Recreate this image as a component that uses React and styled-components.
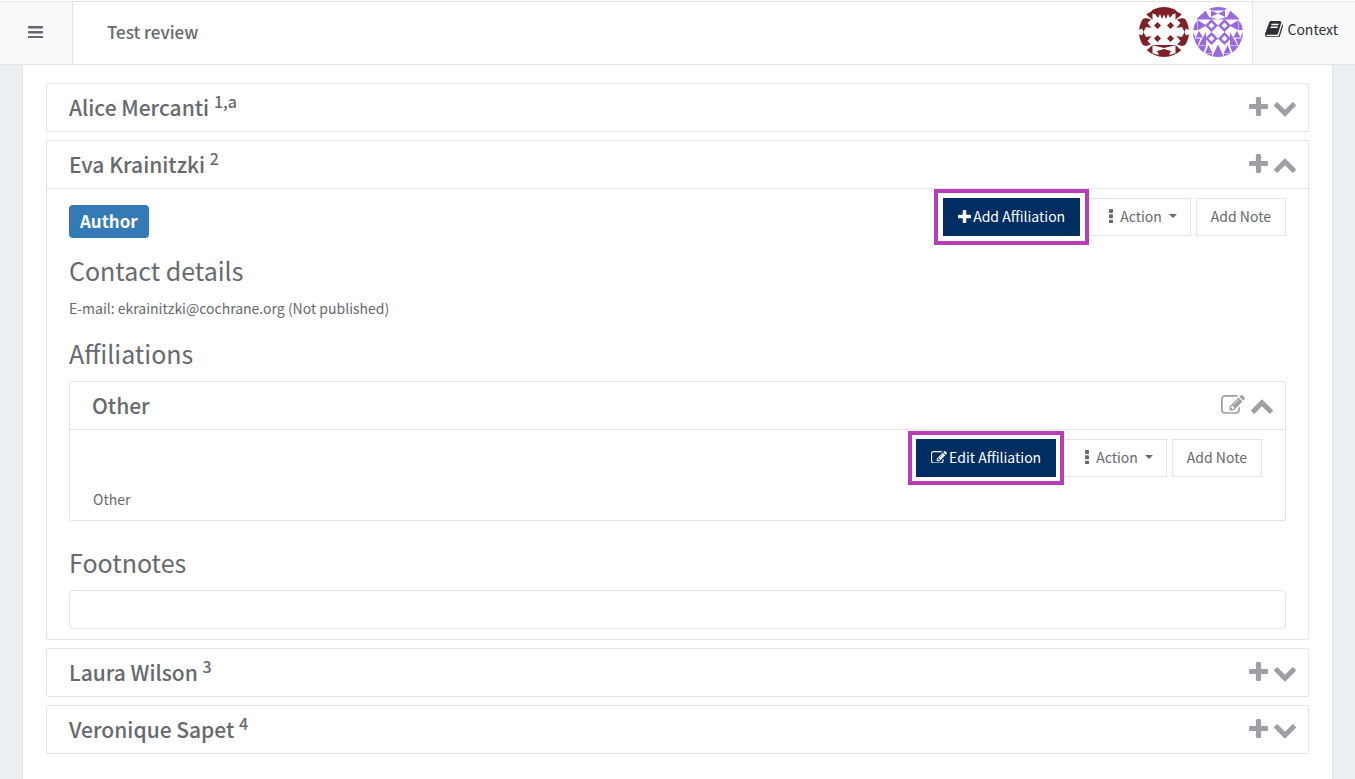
import React, { useState } from "react";
import styled, { createGlobalStyle } from "styled-components";

const colors = {
  text: "#66696d",
  dark: "#2f3033",
  icon: "#9d9fa4",
  line: "#e3e4e6",
  page: "#ebeff4",
  soft: "#f7f9fb",
  navy: "#002d62",
  badge: "#337ab7",
  callout: "#b83db8",
};

const icons = {
  bars: {
    box: "128 256 1536 1280",
    d: "M1664 1344v128q0 26-19 45t-45 19h-1408q-26 0-45-19t-19-45v-128q0-26 19-45t45-19h1408q26 0 45 19t19 45zm0-512v128q0 26-19 45t-45 19h-1408q-26 0-45-19t-19-45v-128q0-26 19-45t45-19h1408q26 0 45 19t19 45zm0-512v128q0 26-19 45t-45 19h-1408q-26 0-45-19t-19-45v-128q0-26 19-45t45-19h1408q26 0 45 19t19 45z",
  },
  plus: {
    box: "192 128 1408 1408",
    d: "M1600 736v192q0 40-28 68t-68 28h-416v416q0 40-28 68t-68 28h-192q-40 0-68-28t-28-68v-416h-416q-40 0-68-28t-28-68v-192q0-40 28-68t68-28h416v-416q0-40 28-68t68-28h192q40 0 68 28t28 68v416h416q40 0 68 28t28 68z",
  },
  down: {
    box: "90 0 1612 1664",
    d: "M1683 808l-742 741q-19 19-45 19t-45-19l-742-741q-19-19-19-45.500t19-45.500l166-165q19-19 45-19t45 19l531 531 531-531q19-19 45-19t45 19l166 165q19 19 19 45.500t-19 45.500z",
  },
  up: {
    box: "90 0 1612 1664",
    d: "M1683 1331l-166 165q-19 19-45 19t-45-19l-531-531-531 531q-19 19-45 19t-45-19l-166-165q-19-19-19-45.500t19-45.500l742-741q19-19 45-19t45 19l742 741q19 19 19 45.500t-19 45.500z",
  },
  edit: {
    box: "0 128 1792 1408",
    d: "M888 1184l116-116-152-152-116 116v56h96v96h56zm440-720q-16-16-33 1l-350 350q-17 17-1 33t33-1l350-350q17-17 1-33zm80 594v190q0 119-84.500 203.500t-203.500 84.500h-832q-119 0-203.500-84.500t-84.500-203.500v-832q0-119 84.500-203.500t203.500-84.500h832q63 0 117 25 15 7 18 23 3 17-9 29l-49 49q-14 14-32 8-23-6-45-6h-832q-66 0-113 47t-47 113v832q0 66 47 113t113 47h832q66 0 113-47t47-113v-126q0-13 9-22l64-64q15-15 35-7t20 29zm-96-738l288 288-672 672h-288v-288zm444 132l-92 92-288-288 92-92q28-28 68-28t68 28l152 152q28 28 28 68t-28 68z",
  },
  dots: {
    box: "704 128 384 1408",
    d: "M1088 1248v192q0 40-28 68t-68 28h-192q-40 0-68-28t-28-68v-192q0-40 28-68t68-28h192q40 0 68 28t28 68zm0-512v192q0 40-28 68t-68 28h-192q-40 0-68-28t-28-68v-192q0-40 28-68t68-28h192q40 0 68 28t28 68zm0-512v192q0 40-28 68t-68 28h-192q-40 0-68-28t-28-68v-192q0-40 28-68t68-28h192q40 0 68 28t28 68z",
  },
  book: {
    box: "64 128 1664 1536",
    d: "M1703 478q40 57 18 129l-275 906q-19 64-76.500 107.500t-122.500 43.500h-923q-77 0-148.500-53.500t-99.500-131.500q-24-67-2-127 0-4 3-27t4-37q1-8-3-21.500t-3-19.500q2-11 8-21t16.500-23.500 16.500-23.500q23-38 45-91.500t30-91.500q3-10 .5-30t-.5-28q3-11 17-28t17-23q21-36 42-92t25-90q1-9-2.500-32t.5-28q4-13 22-30.500t22-22.500q19-26 42.500-84.500t27.500-96.500q1-8-3-25.500t-2-26.500q2-8 9-18t18-23 17-21q8-12 16.500-30.500t15-35 16-36 19.500-32 26.500-23.500 36-11.500 47.500 5.500l-1 3q38-9 51-9h761q74 0 114 56t18 130l-274 906q-36 119-71.500 153.500t-128.500 34.500h-869q-27 0-38 15-11 16-1 43 24 70 144 70h923q29 0 56-15.500t35-41.500l300-987q7-22 5-57 38 15 59 43zm-1064 2q-4 13 2 22.500t20 9.500h608q13 0 25.500-9.500t16.500-22.500l21-64q4-13-2-22.500t-20-9.500h-608q-13 0-25.500 9.500t-16.500 22.500zm-83 256q-4 13 2 22.500t20 9.500h608q13 0 25.500-9.500t16.500-22.500l21-64q4-13-2-22.500t-20-9.500h-608q-13 0-25.500 9.500t-16.500 22.500z",
  },
};

const Icon = ({ name, width }) => (
  <Glyph viewBox={icons[name].box} $width={width} aria-hidden="true">
    <path d={icons[name].d} />
  </Glyph>
);

// both avatars are drawn on a 100 x 100 field, four cells of 25 each way
const RedAvatar = () => (
  <Avatar viewBox="0 0 100 100" role="img" aria-label="Reviewer one">
    <g fill="#7f2126">
      <path d="M25 0H75V12L67 15L62 22L58 14L54 24L50 15L46 24L42 14L38 22L33 15L25 12Z" />
      <path d="M25 76H75V100H25V92L40 96L36 88L50 84L64 88L60 96L75 92V76L50 82L25 76Z" />
      {[0, 1].map((side) => (
        <g key={side} transform={side ? "matrix(-1 0 0 1 100 0)" : undefined}>
          <path d="M0 26L14 22L24 25L17 32L25 42L14 40L9 50L6 43L0 46Z" />
          <path d="M0 74L14 78L24 75L17 68L25 58L14 60L9 50L6 57L0 54Z" />
          <path d="M14 14L27 8V25L20 20Z" />
          <path d="M14 88L27 76V94Z" />
        </g>
      ))}
      {[37, 63].map((x) =>
        [37, 63].map((y) => (
          <path key={`${x}${y}`} d={`M${x} ${y - 7}l7 7l-7 7l-7-7z`} />
        ))
      )}
    </g>
  </Avatar>
);

const PurpleAvatar = () => (
  <Avatar viewBox="0 0 100 100" role="img" aria-label="Reviewer two">
    <g fill="#9a68e0">
      <path d="M25 0H75L62 7H38Z" />
      <path d="M50 75L62 100H38Z" />
      {[0, 1].map((side) => (
        <g key={side} transform={side ? "matrix(-1 0 0 1 100 0)" : undefined}>
          <path d="M36 7L50 13L36 20Z" />
          <path d="M25 7L32 20L50 25H6L20 12Z" />
          <path d="M9 26L27 37L9 47Z" />
          <path d="M8 28V46H0L3 35Z" />
          <path d="M12 48L20 61H5Z" />
          <path d="M0 50L5 61L0 68Z" />
          <path d="M26 50V77H11Z" />
          <path d="M2 63H15L8 80Z" />
          <path d="M9 78H26L20 94Z" />
          <path d="M31 76L39 93H24Z" />
          <path d="M25 94H38V100H28Z" />
        </g>
      ))}
      {[37, 63].map((x) =>
        [37, 63].map((y) => (
          <path
            key={`${x}${y}`}
            fillRule="evenodd"
            d={`M${x} ${y - 13}l13 13l-13 13l-13-13zM${x} ${y - 6}l-6 6l6 6l6-6z`}
          />
        ))
      )}
    </g>
  </Avatar>
);

const ActionBar = ({ icon, label, reach }) => (
  <Buttons>
    <PrimaryButton type="button" $reach={reach}>
      <Icon name={icon} width={icon === "plus" ? 13 : 16} />
      {label}
    </PrimaryButton>
    <MenuToggle type="button" aria-haspopup="menu">
      <Icon name="dots" width={4} />
      Action
      <Caret />
    </MenuToggle>
    <PlainButton type="button">Add Note</PlainButton>
  </Buttons>
);

const AuthorCard = ({ name, mark, startOpen, children }) => {
  const [open, setOpen] = useState(Boolean(startOpen));
  return (
    <Card>
      <CardHeader>
        <CardTitle>
          {name} <Mark>{mark}</Mark>
        </CardTitle>
        <IconButton type="button" aria-label={`Add to ${name}`}>
          <Icon name="plus" width={19} />
        </IconButton>
        <IconButton
          type="button"
          aria-label={`Toggle ${name}`}
          aria-expanded={open}
          onClick={() => setOpen(!open)}
        >
          <Icon name={open ? "up" : "down"} width={22} />
        </IconButton>
      </CardHeader>
      {open && children}
    </Card>
  );
};

const App = () => {
  const [showOther, setShowOther] = useState(true);
  const [footnotes, setFootnotes] = useState("");

  return (
    <>
      <GlobalStyle />
      <TopBar>
        <MenuButton type="button" aria-label="Menu">
          <Icon name="bars" width={15} />
        </MenuButton>
        <ReviewBar>
          <ReviewTitle>Test review</ReviewTitle>
          <Avatars>
            <RedAvatar />
            <PurpleAvatar />
          </Avatars>
        </ReviewBar>
        <ContextLink href="#context">
          <Icon name="book" width={18} />
          Context
        </ContextLink>
      </TopBar>
      <Page>
        <AuthorCard name="Alice Mercanti" mark="1,a" />
        <AuthorCard name="Eva Krainitzki" mark="2" startOpen>
          <CardBody>
            <BodyTop>
              <Badge>Author</Badge>
              <ActionBar icon="plus" label="Add Affiliation" reach={8} />
            </BodyTop>
            <SectionTitle>Contact details</SectionTitle>
            <Email>E-mail: ekrainitzki@cochrane.org (Not published)</Email>
            <SectionTitle>Affiliations</SectionTitle>
            <InnerCard>
              <CardHeader>
                <CardTitle as="h4">Other</CardTitle>
                <IconButton type="button" aria-label="Edit Other">
                  <Icon name="edit" width={24} />
                </IconButton>
                <IconButton
                  type="button"
                  aria-label="Toggle Other"
                  aria-expanded={showOther}
                  onClick={() => setShowOther(!showOther)}
                >
                  <Icon name={showOther ? "up" : "down"} width={22} />
                </IconButton>
              </CardHeader>
              {showOther && (
                <InnerBody>
                  <ActionBar icon="edit" label="Edit Affiliation" reach={7} />
                  <Institution>Other</Institution>
                </InnerBody>
              )}
            </InnerCard>
            <SectionTitle>
              <label htmlFor="footnotes">Footnotes</label>
            </SectionTitle>
            <FootnoteInput
              id="footnotes"
              type="text"
              value={footnotes}
              onChange={(e) => setFootnotes(e.target.value)}
            />
          </CardBody>
        </AuthorCard>
        <AuthorCard name="Laura Wilson" mark="3" />
        <AuthorCard name="Veronique Sapet" mark="4" />
      </Page>
    </>
  );
};

export default App;

const GlobalStyle = createGlobalStyle`
  *, *::before, *::after {
    box-sizing: border-box;
  }
  body {
    margin: 0;
    background: ${colors.page};
    color: ${colors.text};
    font-family: "Source Sans Pro", "Noto Sans CJK SC", sans-serif;
    font-size: 14px;
    line-height: 20px;
  }
  button, input {
    font: inherit;
    color: inherit;
  }
  h1, h2, h3, h4, p {
    margin: 0;
  }
`;

const Glyph = styled.svg`
  display: block;
  flex: none;
  width: ${(props) => props.$width}px;
  fill: currentColor;
`;

const TopBar = styled.header`
  display: flex;
  align-items: stretch;
  height: 65px;
  padding-top: 1px;
  background: white;
  border-bottom: 1px solid ${colors.line};
`;
const MenuButton = styled.button`
  display: flex;
  align-items: center;
  justify-content: center;
  width: 73px;
  padding: 0 2px 2px 0;
  background: ${colors.soft};
  border: 0;
  border-top: 1px solid ${colors.line};
  border-right: 1px solid ${colors.line};
  cursor: pointer;
`;
const ReviewBar = styled.div`
  flex: 1;
  display: flex;
  align-items: center;
  justify-content: space-between;
  padding: 0 9px 2px 34px;
  border-top: 1px solid ${colors.line};
`;
const ReviewTitle = styled.h1`
  font-size: 17px;
  line-height: 24px;
  font-weight: 500;
`;
const Avatars = styled.div`
  display: flex;
  align-items: center;
  gap: 4px;
`;
const Avatar = styled.svg`
  display: block;
  width: 50px;
  height: 50px;
  border-radius: 50%;
`;
const ContextLink = styled.a`
  display: flex;
  align-items: center;
  gap: 4px;
  padding: 0 17px 8px 12px;
  color: ${colors.dark};
  background: ${colors.soft};
  border-top: 1px solid ${colors.line};
  border-left: 1px solid ${colors.line};
  text-decoration: none;
`;

const Page = styled.main`
  display: flex;
  flex-direction: column;
  gap: 8px;
  margin: 0 22px;
  min-height: calc(100vh - 65px);
  padding: 18px 23px 24px;
  background: white;
  border: solid ${colors.line};
  border-width: 0 1px;
`;
const Card = styled.section`
  border: 1px solid ${colors.line};
  border-radius: 2px;
`;
const CardHeader = styled.header`
  display: flex;
  align-items: center;
  gap: 6px;
  min-height: 47px;
  padding: 0 12px 2px 22px;
`;
const CardTitle = styled.h2`
  flex: 1;
  font-size: 21px;
  line-height: 30px;
  font-weight: 500;
`;
const Mark = styled.sup`
  font-size: 16px;
  line-height: 0;
`;
const IconButton = styled.button`
  display: flex;
  padding: 0;
  border: 0;
  background: none;
  color: ${colors.icon};
  cursor: pointer;
`;
const CardBody = styled.div`
  padding: 9px 22px 10px;
  border-top: 1px solid ${colors.line};
`;
const BodyTop = styled.div`
  display: flex;
  align-items: flex-start;
  justify-content: space-between;
`;
const Badge = styled.span`
  margin-top: 7px;
  padding: 3px 11px 5px;
  border-radius: 4px;
  background: ${colors.badge};
  color: white;
  font-size: 17px;
  line-height: 25px;
  font-weight: 700;
`;
const Buttons = styled.div`
  display: flex;
  justify-content: flex-end;
  gap: 5px;
`;
const PlainButton = styled.button`
  display: flex;
  align-items: center;
  gap: 6px;
  height: 38px;
  padding: 0 14px 2px;
  border: 1px solid ${colors.line};
  background: white;
  cursor: pointer;
`;
const MenuToggle = styled(PlainButton)`
  gap: 7px;
  padding: 0 13px 2px 23px;
`;
const PrimaryButton = styled(PlainButton)`
  position: relative;
  gap: 2px;
  border-color: ${colors.navy};
  background: ${colors.navy};
  color: white;
  &::after {
    content: "";
    position: absolute;
    inset: -${(props) => props.$reach + 2}px;
    border: 4px solid ${colors.callout};
  }
`;
const Caret = styled.span`
  border: 4px solid transparent;
  border-top-color: currentColor;
  border-bottom: 0;
`;
const SectionTitle = styled.h3`
  margin: 16px 0 12px;
  font-size: 25px;
  line-height: 32px;
  font-weight: 400;
`;
const Email = styled.p`
  padding-bottom: 3px;
`;
const InnerCard = styled.div`
  border: 1px solid ${colors.line};
  border-radius: 2px;
  margin-bottom: 25px;
`;
const InnerBody = styled.div`
  padding: 9px 23px 11px;
  border-top: 1px solid ${colors.line};
`;
const Institution = styled.p`
  margin-top: 12px;
`;
const FootnoteInput = styled.input`
  display: block;
  width: 100%;
  height: 39px;
  padding: 0 12px;
  border: 1px solid ${colors.line};
  border-radius: 4px;
  background: white;
`;
